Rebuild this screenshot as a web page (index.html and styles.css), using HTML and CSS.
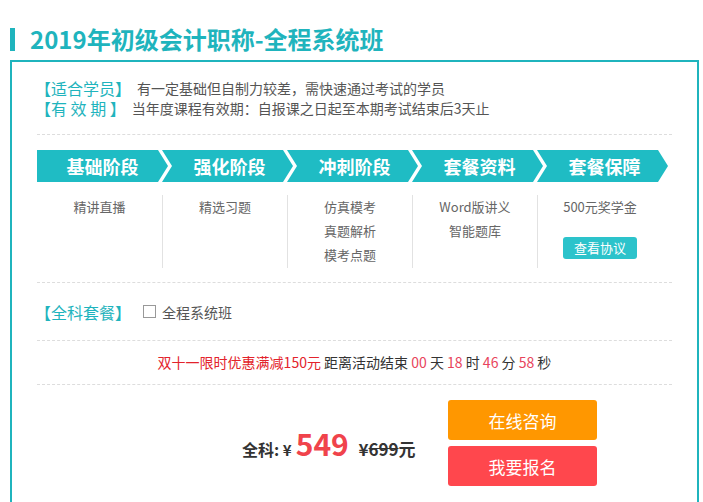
FILE: index.html
```html
<!DOCTYPE html>
<html lang="zh-CN">
<head>
    <meta charset="UTF-8">
    <meta name="viewport" content="width=device-width, initial-scale=1.0">
    <title>2019年初级会计职称-全程系统班</title>
    <link rel="stylesheet" href="styles.css">
</head>
<body>
    <h1 class="title">2019年初级会计职称-全程系统班</h1>

    <div class="panel">
        <div class="intro">
            <p><span class="label">【适合学员】</span>有一定基础但自制力较差，需快速通过考试的学员</p>
            <p><span class="label">【有 效 期 】</span>当年度课程有效期：自报课之日起至本期考试结束后3天止</p>
        </div>

        <div class="steps">
            <div class="step first">基础阶段</div>
            <div class="step">强化阶段</div>
            <div class="step">冲刺阶段</div>
            <div class="step">套餐资料</div>
            <div class="step">套餐保障</div>
        </div>

        <div class="cols">
            <div class="col">精讲直播</div>
            <div class="col">精选习题</div>
            <div class="col">仿真模考<br>真题解析<br>模考点题</div>
            <div class="col">Word版讲义<br>智能题库</div>
            <div class="col">500元奖学金<br><a class="agree" href="#">查看协议</a></div>
        </div>

        <div class="package">
            <span class="label">【全科套餐】</span>
            <span class="check"></span>
            <span>全程系统班</span>
        </div>

        <div class="countdown">
            <span class="promo">双十一限时优惠满减150元</span> 距离活动结束
            <em>00</em> 天 <em>18</em> 时 <em>46</em> 分 <em>58</em> 秒
        </div>

        <div class="buy">
            <div class="price">
                全科: <span class="yen">¥</span><span class="now">549</span>
                <span class="old">¥<s>699</s>元</span>
            </div>
            <div class="actions">
                <button class="btn consult">在线咨询</button>
                <button class="btn signup">我要报名</button>
            </div>
        </div>
    </div>
</body>
</html>
```

FILE: styles.css
```css
body {
    font-family: "Noto Sans CJK SC", "Noto Sans", sans-serif;
    background-color: #fff;
    color: #555;
    margin: 0;
    padding: 0;
}
.title {
    margin: 0 0 4px;
    padding: 22px 0 0 10px;
    height: 34px;
    display: flex;
    align-items: center;
    font-size: 24px;
    line-height: 24px;
    color: #1fb4bd;
}
.title::before {
    content: "";
    width: 5px;
    height: 23px;
    margin-right: 15px;
    background-color: #1fb4bd;
}
.panel {
    margin-left: 10px;
    border: 2px solid #1fb4bd;
    border-bottom: none;
    padding: 0 25px;
    width: 635px;
}
.label {
    color: #1fb4bd;
    font-size: 16px;
    line-height: 16px;
    margin-left: -2px;
    margin-right: 6px;
}
.intro {
    padding: 16px 0;
    border-bottom: 1px dashed #ddd;
}
.intro p {
    margin: 0;
    display: flex;
    align-items: center;
    height: 20px;
    font-size: 14px;
    line-height: 16px;
}
.steps {
    display: flex;
    margin-top: 15px;
    height: 32px;
}
.step {
    width: 131px;
    flex: none;
    margin-left: -6px;
    background-color: #1fbcc4;
    color: #fff;
    font-size: 18px;
    font-weight: bold;
    line-height: 32px;
    text-align: center;
    padding-left: 4px;
    box-sizing: border-box;
    clip-path: polygon(0 0, calc(100% - 10px) 0, 100% 50%, calc(100% - 10px) 100%, 0 100%, 10px 50%);
}
.step.first {
    margin-left: 0;
    padding-left: 0;
    clip-path: polygon(0 0, calc(100% - 10px) 0, 100% 50%, calc(100% - 10px) 100%, 0 100%);
}
.cols {
    display: flex;
    margin-top: 13px;
    padding-bottom: 14px;
    border-bottom: 1px dashed #ddd;
}
.col {
    width: 125px;
    height: 73px;
    font-size: 13px;
    line-height: 24px;
    color: #666;
    text-align: center;
    border-left: 1px solid #e2e2e2;
    box-sizing: border-box;
}
.col:first-child {
    border-left: none;
}
.agree {
    display: inline-block;
    margin-top: 18px;
    width: 74px;
    height: 22px;
    line-height: 22px;
    border-radius: 3px;
    background-color: #2cc3cb;
    color: #fff;
    text-decoration: none;
}
.package {
    display: flex;
    align-items: center;
    height: 57px;
    font-size: 14px;
    border-bottom: 1px dashed #ddd;
}
.package .label {
    margin-right: 12px;
}
.check {
    width: 11px;
    height: 11px;
    border: 1px solid #999;
    margin-right: 6px;
}
.countdown {
    height: 43px;
    line-height: 43px;
    font-size: 14px;
    color: #333;
    text-align: center;
    border-bottom: 1px dashed #ddd;
}
.promo {
    color: #e3232b;
}
.countdown em {
    font-style: normal;
    color: #e8445c;
}
.buy {
    display: flex;
    align-items: center;
    padding: 15px 0 20px 205px;
}
.price {
    font-size: 16px;
    font-weight: bold;
    color: #333;
    width: 206px;
}
.yen {
    font-size: 15px;
}
.now {
    font-size: 30px;
    color: #f0434b;
    margin: 0 6px 0 4px;
}
.old {
    font-size: 17px;
}
.actions {
    display: flex;
    flex-direction: column;
    gap: 6px;
}
.btn {
    width: 149px;
    height: 40px;
    border: none;
    border-radius: 3px;
    color: #fff;
    font-family: inherit;
    font-size: 17px;
    cursor: pointer;
}
.consult {
    background-color: #ff9700;
}
.signup {
    background-color: #ff474d;
}
```
